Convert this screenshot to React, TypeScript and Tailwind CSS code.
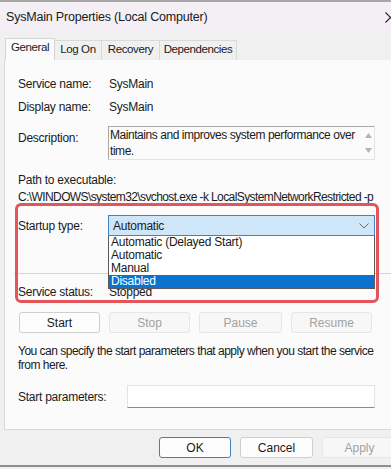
const FONT = "font-['Liberation_Sans',Arial,sans-serif]";

function Tab({ label, active, w }: { label: string; active?: boolean; w: string }) {
  return active ? (
    <div className={"flex h-[22px] items-end justify-center border border-b-0 border-[#d5d5d5] bg-[#fbfbfb] pb-[4px] " + w}>
      {label}
    </div>
  ) : (
    <div className={"flex h-[20px] items-end justify-center border-t border-r border-[#d9d9d9] bg-[#f0f0f0] pb-[2px] " + w}>
      {label}
    </div>
  );
}

function Btn({ label, disabled, primary, w = "w-[81px]" }: { label: string; disabled?: boolean; primary?: boolean; w?: string }) {
  return (
    <div
      className={
        "flex h-[21px] shrink-0 items-center justify-center rounded-[3px] border text-[12px] " +
        w +
        " " +
        (disabled
          ? "border-[#e6e6e6] bg-[#f7f7f7] text-[#a2a2a2]"
          : primary
            ? "border-[#3d7fbf] bg-[#fdfdfd] text-[#1a1a1a]"
            : "border-[#cfcfcf] bg-[#fdfdfd] text-[#1a1a1a]")
      }
    >
      {label}
    </div>
  );
}

export default function App() {
  return (
    <div className={"relative h-[469px] w-[391px] overflow-hidden bg-[#f0f0f0] text-[#1a1a1a] " + FONT}>
      {/* title bar */}
      <div className="flex h-[32px] items-center border-t-2 border-[#a8a8a8] bg-[#f4eff5] pl-[6px]">
        <span className="text-[12.5px] tracking-[-0.2px]">SysMain Properties (Local Computer)</span>
        <svg className="ml-auto mr-[-5px] h-[11px] w-[11px]" viewBox="0 0 11 11" fill="none" stroke="#222" strokeWidth="1.1">
          <path d="M0.5 0.5 L10.5 10.5 M10.5 0.5 L0.5 10.5" />
        </svg>
      </div>

      {/* tabs */}
      <div className="flex h-[28px] items-end bg-[#f0f0f0] pl-[5px] text-[11.5px] tracking-[-0.4px]">
        <Tab label="General" active w="w-[50px]" />
        <Tab label="Log On" w="w-[47px]" />
        <Tab label="Recovery" w="w-[58px]" />
        <Tab label="Dependencies" w="w-[77px]" />
      </div>

      {/* panel */}
      <div className="relative ml-[4px] h-[370px] border-l border-b border-[#d9d9d9] bg-[#fbfbfb] pl-[13px] text-[12px] tracking-[-0.25px]">
        <div className="flex pt-[16px] leading-[16px]">
          <span className="w-[91px]">Service name:</span>
          <span>SysMain</span>
        </div>
        <div className="mt-[7px] flex leading-[16px]">
          <span className="w-[91px]">Display name:</span>
          <span>SysMain</span>
        </div>
        <div className="mt-[11px] flex">
          <span className="w-[90px] pt-[4px] leading-[16px]">Description:</span>
          <div className="relative h-[34px] w-[267px] border border-[#a9a9a9] border-r-[#e3e3e3] border-b-[#e3e3e3] pl-[1px] pr-[12px] leading-[16px] tracking-[-0.45px]">
            Maintains and improves system performance over time.
            <div className="absolute right-0 top-0 flex h-full w-[12px] flex-col items-center justify-between py-[6px]">
              <svg className="h-[5px] w-[7px]" viewBox="0 0 7 5"><path d="M0 5 L3.5 0 L7 5 Z" fill="#b4b4b4" /></svg>
              <svg className="h-[5px] w-[7px]" viewBox="0 0 7 5"><path d="M0 0 L3.5 5 L7 0 Z" fill="#b4b4b4" /></svg>
            </div>
          </div>
        </div>
        <div className="mt-[12px] leading-[16px]">Path to executable:</div>
        <div className="mt-[1px] whitespace-nowrap leading-[16px] tracking-[-0.6px]">C:\WINDOWS\system32\svchost.exe -k LocalSystemNetworkRestricted -p</div>

        <div className="relative mt-[10px] flex">
          <span className="w-[90px] pt-[3px] leading-[16px]">Startup type:</span>
          <div className="flex h-[21px] w-[267px] items-center border border-[#3b84c9] bg-[#cfe5f8] pl-[4px]">
            <span>Automatic</span>
            <svg className="ml-auto mr-[5px] h-[6px] w-[10px]" viewBox="0 0 10 6" fill="none" stroke="#6c6c6c" strokeWidth="1">
              <path d="M0.5 0.5 L5 5 L9.5 0.5" />
            </svg>
          </div>
          {/* open list */}
          <div className="absolute left-[90px] top-[21px] z-10 flex w-[267px] flex-col border border-t-0 border-[#5a5a5a] bg-white text-[12px] leading-[13px]">
            <span className="pl-[2px]">Automatic (Delayed Start)</span>
            <span className="pl-[2px]">Automatic</span>
            <span className="pl-[2px]">Manual</span>
            <span className="bg-[#0a73cf] pl-[2px] text-white">Disabled</span>
          </div>
        </div>

        <div className="ml-[-4px] mt-[37px] h-[2px] border-t border-[#d4d4d4] border-b-white" />
        <div className="mt-[9px] flex leading-[16px]">
          <span className="w-[91px]">Service status:</span>
          <span>Stopped</span>
        </div>

        <div className="mt-[12px] flex gap-[9px] pl-[1px] tracking-normal">
          <Btn label="Start" />
          <Btn label="Stop" disabled />
          <Btn label="Pause" disabled w="w-[83px]" />
          <Btn label="Resume" disabled />
        </div>

        <div className="mt-[11px] w-[370px] leading-[14px] tracking-[-0.5px]">
          You can specify the start parameters that apply when you start the service from here.
        </div>

        <div className="mt-[13px] flex items-center">
          <span className="w-[109px]">Start parameters:</span>
          <div className="h-[23px] w-[248px] border border-[#e3e3e3] border-b-[#8a8a8a] bg-white" />
        </div>

        {/* highlight annotation */}
        <div className="pointer-events-none absolute left-[10px] top-[143px] z-20 h-[100px] w-[364px] rounded-[6px] border-[3px] border-[#e4545b]" />
      </div>

      {/* footer buttons */}
      <div className="flex h-[37px] items-center gap-[9px] border-b-2 border-[#8f8f8f] bg-[#f0f0f0] pl-[159px]">
        <Btn label="OK" primary w="w-[72px]" />
        <Btn label="Cancel" w="w-[73px]" />
        <Btn label="Apply" disabled w="w-[75px]" />
      </div>
    </div>
  );
}
